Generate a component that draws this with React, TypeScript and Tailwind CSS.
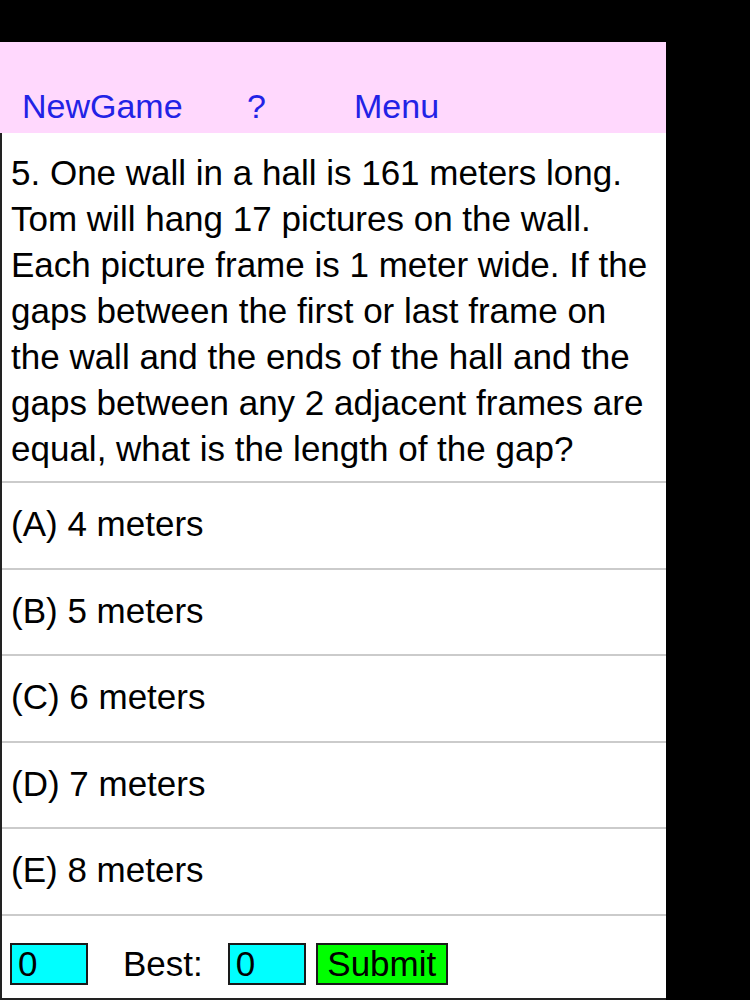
const options = [
  "(A) 4 meters",
  "(B) 5 meters",
  "(C) 6 meters",
  "(D) 7 meters",
  "(E) 8 meters",
];

const question =
  "5. One wall in a hall is 161 meters long. Tom will hang 17 pictures on the wall. Each picture frame is 1 meter wide. If the gaps between the first or last frame on the wall and the ends of the hall and the gaps between any 2 adjacent frames are equal, what is the length of the gap?";

export default function App() {
  return (
    <div
      className="w-[750px] h-[1000px] bg-black overflow-hidden pt-[42px]"
      style={{ fontFamily: '"Liberation Sans", Arial, sans-serif' }}
    >
      <div className="w-[666px] h-[958px] flex flex-col">
        <Header />
        <div className="flex-1 bg-white border-l-2 border-b-2 border-[#222] flex flex-col">
          <div className="h-[350px] border-b-2 border-[#cbcbcb] pl-[9px] pr-[6px] pt-[17px] text-[35px] leading-[46px] text-black">
            {question}
          </div>
          {options.map((opt) => (
            <div
              key={opt}
              className="h-[86.6px] border-b-2 border-[#cbcbcb] pl-[9px] pt-[18px] text-[35px] leading-[46px] text-black"
            >
              {opt}
            </div>
          ))}
          <Footer />
        </div>
      </div>
    </div>
  );
}

const Header = () => {
  return (
    <div className="h-[91px] bg-[#ffd8fd] flex items-end pb-[10px] pl-[22px] text-[34px] leading-none text-[#2222e6]">
      <span className="w-[225px]">NewGame</span>
      <span className="w-[107px]">?</span>
      <span>Menu</span>
    </div>
  );
};

const Footer = () => {
  return (
    <div className="flex-1 flex items-start pt-[27px] pl-[8px] text-[35px] text-black">
      <div className="w-[78px] h-[42px] bg-[#00ffff] border-2 border-[#1a1a1a] pl-[6px] leading-[38px]">
        0
      </div>
      <span className="ml-[35px] leading-[42px]">Best:</span>
      <div className="ml-[25px] w-[78px] h-[42px] bg-[#00ffff] border-2 border-[#1a1a1a] pl-[6px] leading-[38px]">
        0
      </div>
      <button className="ml-[10px] w-[132px] h-[42px] bg-[#00ff00] border-2 border-[#1a1a1a] leading-[38px] text-center">
        Submit
      </button>
    </div>
  );
};
